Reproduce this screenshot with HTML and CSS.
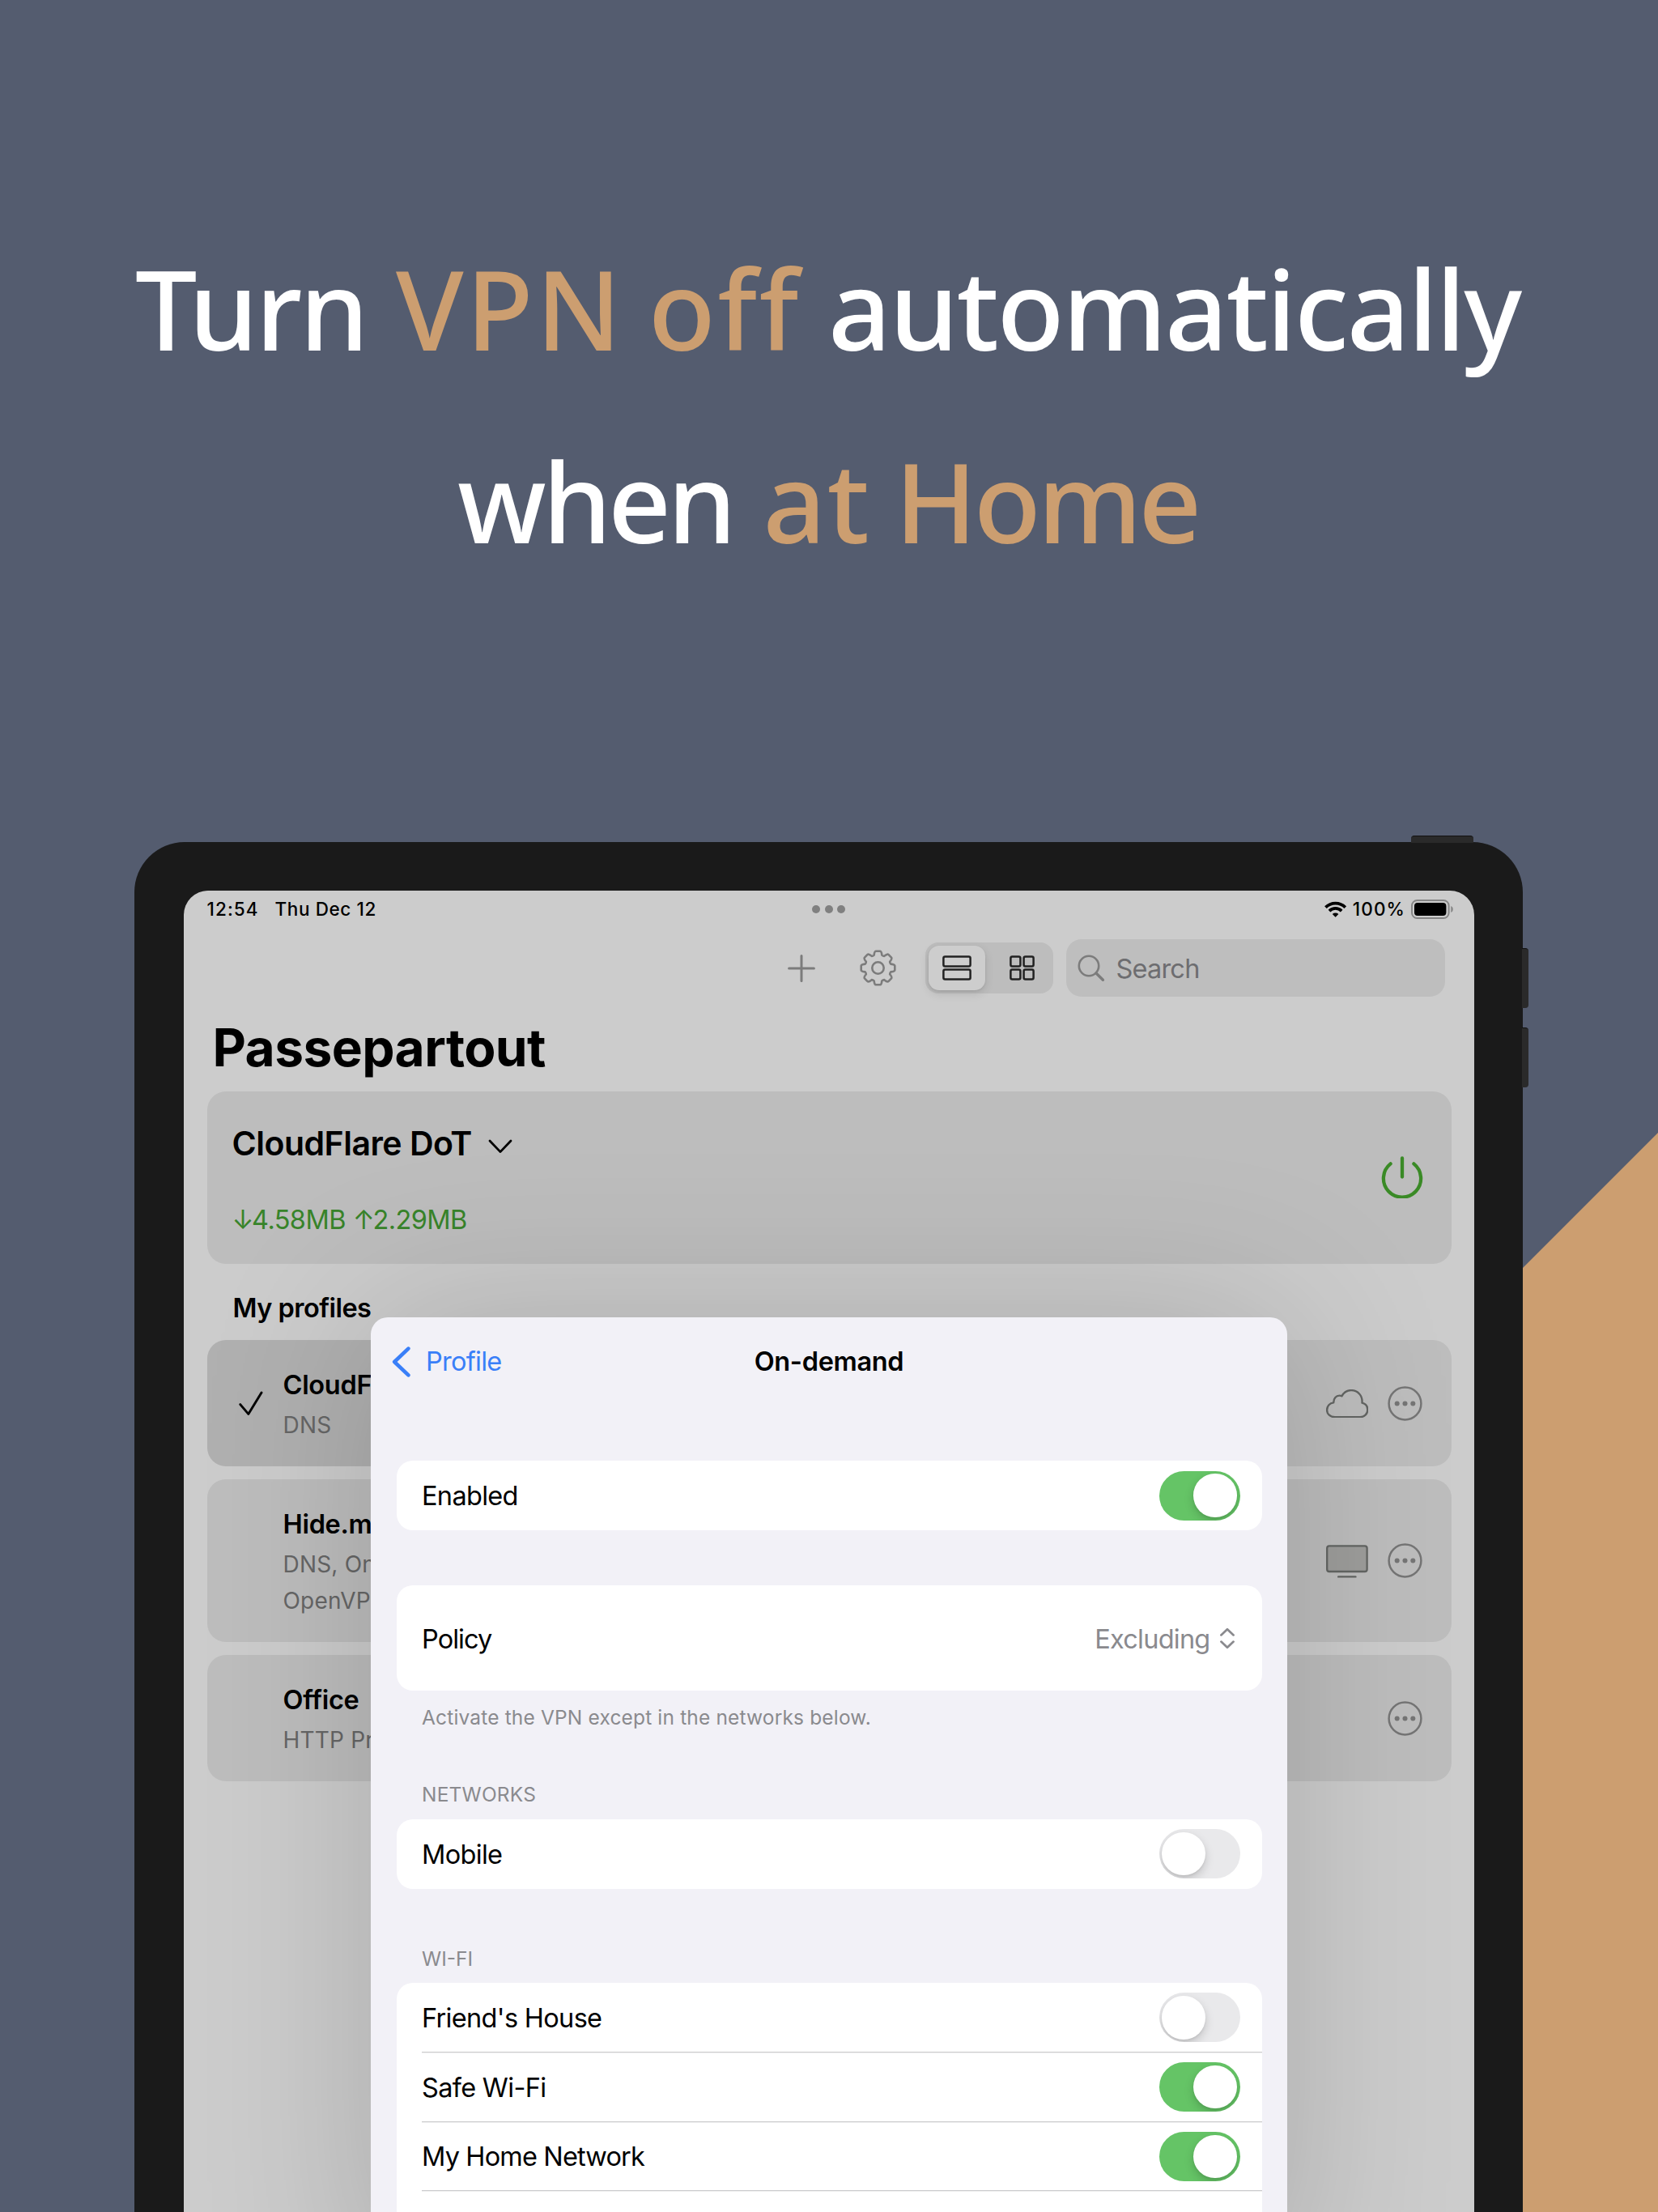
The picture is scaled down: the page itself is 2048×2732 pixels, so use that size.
FILE: index.html
```html
<!DOCTYPE html>
<html lang="en">
<head>
<meta charset="utf-8">
<title>Passepartout</title>
<link rel="stylesheet" href="styles.css">
</head>
<body>
<main class="poster">
  <div class="accent"></div>

  <h1 class="headline">
    <span class="headline-row">
      <span class="w-turn">Turn</span> <span class="w-vpn hl">VPN</span> <span class="w-off hl">off</span> <span class="w-auto">automatically</span>
    </span>
    <span class="headline-row second">
      <span class="w-when">when</span> <span class="w-at hl">at</span> <span class="w-home hl">Home</span>
    </span>
  </h1>

  <div class="device">
    <span class="key key-top"></span>
    <span class="key key-up"></span>
    <span class="key key-down"></span>

    <div class="screen">
      <div class="status">
        <div class="status-left"><span class="time">12:54</span><span class="date">Thu Dec 12</span></div>
        <div class="dots"><i></i><i></i><i></i></div>
        <div class="status-right">
          <svg class="wifi" viewBox="0 0 27.2 20" fill="none" stroke="#000" stroke-width="3.7"><path d="M1.4 7.6A17.2 17.2 0 0 1 25.8 7.6"/><path d="M6 12.1A10.8 10.8 0 0 1 21.2 12.1"/><path d="M13.6 19.8 9.8 15.9A5.6 5.6 0 0 1 17.4 15.9Z" fill="#000" stroke="none"/></svg>
          <span class="pct">100%</span>
          <svg class="battery" viewBox="0 0 53 24"><rect x="1" y="1" width="45.6" height="22" rx="6.5" fill="none" stroke="#858585" stroke-width="1.9"/><rect x="4" y="4" width="39.4" height="16" rx="4" fill="#000"/><path d="M49.3 8C52.6 9.2 52.6 14.8 49.3 16Z" fill="#858585"/></svg>
        </div>
      </div>

      <div class="toolbar">
        <svg class="ic-plus" viewBox="0 0 34 34" stroke="#7c7c7c" stroke-width="3" stroke-linecap="round"><path d="M17 1.6V32.4M1.6 17H32.4"/></svg>
        <svg class="ic-gear" viewBox="-22.5 -22.5 45 45" fill="none" stroke="#7c7c7c" stroke-width="2.6" stroke-linejoin="round"><path d="M-4.85-15.87Q-4.4-20.65-2.6-20.8H2.6Q4.4-20.65 4.85-15.87Q6.3-14.6 7.79-14.65Q11.5-17.7 12.9-16.55L16.55-12.9Q17.7-11.5 14.65-7.79Q14.6-6.3 15.87-4.85Q20.65-4.4 20.8-2.6V2.6Q20.65 4.4 15.87 4.85Q14.6 6.3 14.65 7.79Q17.7 11.5 16.55 12.9L12.9 16.55Q11.5 17.7 7.79 14.65Q6.3 14.6 4.85 15.87Q4.4 20.65 2.6 20.8H-2.6Q-4.4 20.65-4.85 15.87Q-6.3 14.6-7.79 14.65Q-11.5 17.7-12.9 16.55L-16.55 12.9Q-17.7 11.5-14.65 7.79Q-14.6 6.3-15.87 4.85Q-20.65 4.4-20.8 2.6V-2.6Q-20.65-4.4-15.87-4.85Q-14.6-6.3-14.65-7.79Q-17.7-11.5-16.55-12.9L-12.9-16.55Q-11.5-17.7-7.79-14.65Q-6.3-14.6-4.85-15.87Z"/><circle r="7.2"/></svg>
        <div class="segment">
          <div class="seg on"><svg class="ic-rows" viewBox="0 0 36 31" fill="none" stroke="#222" stroke-width="2.5"><rect x="1.4" y="1.4" width="33.2" height="12" rx="2"/><rect x="1.4" y="17.6" width="33.2" height="12" rx="2"/></svg></div>
          <div class="seg"><svg class="ic-grid" viewBox="0 0 31 31" fill="none" stroke="#222" stroke-width="2.5"><rect x="1.4" y="1.4" width="12" height="12" rx="2"/><rect x="17.6" y="1.4" width="12" height="12" rx="2"/><rect x="1.4" y="17.6" width="12" height="12" rx="2"/><rect x="17.6" y="17.6" width="12" height="12" rx="2"/></svg></div>
        </div>
        <div class="search">
          <svg class="ic-search" viewBox="0 0 34 34" fill="none" stroke="#7c7c7c" stroke-width="2.6" stroke-linecap="round"><circle cx="14" cy="14" r="12.2"/><path d="M23 23 31.4 31.2" stroke-width="3.4"/></svg>
          <span>Search</span>
        </div>
      </div>

      <h2 class="title">Passepartout</h2>

      <section class="current">
        <div class="current-info">
          <div class="current-name"><span>CloudFlare DoT</span><svg class="ic-chev" viewBox="0 0 30 18" fill="none" stroke="#000" stroke-width="2.8" stroke-linecap="round" stroke-linejoin="round"><path d="M2 2 15 15.6 28 2"/></svg></div>
          <div class="traffic"><span class="arrow">↓</span><span class="down">4.58MB</span><span class="arrow">↑</span><span>2.29MB</span></div>
        </div>
        <svg class="ic-power" viewBox="0 0 52 52" fill="none" stroke="#3a8a26" stroke-width="4.3" stroke-linecap="round"><path d="M11.6 9.4A23.1 23.1 0 1 0 40.4 9.4"/><path d="M26 2.4V25.6"/></svg>
      </section>

      <h3 class="section">My profiles</h3>

      <div class="profiles">
        <article class="profile selected">
          <svg class="ic-check" viewBox="0 0 30 31" fill="none" stroke="#000" stroke-width="2.9" stroke-linecap="round" stroke-linejoin="round"><path d="M1.8 16.6 11.8 28.4 28 2"/></svg>
          <div class="profile-text"><b>CloudFlare</b><p>DNS</p></div>
          <div class="profile-icons">
            <svg class="ic-cloud" viewBox="0 0 52.4 35.4" fill="none" stroke="#636563" stroke-width="2.4" stroke-linejoin="round"><path d="M11 34.2C5 34.2 1.1 30.5 1.1 25.4C1.1 20.5 4.6 16.8 9.2 16.4C9.2 11 12.5 7.6 16.5 7.6C17.6 7.6 18.5 7.8 19.4 8.3C21.8 4 26 1.1 31 1.1C39 1.1 45.4 7.5 44.5 16.6C48.7 17.6 51.3 21 51.3 25.2C51.3 30.5 47.2 34.2 42 34.2Z"/></svg>
            <svg class="ic-more" viewBox="0 0 43 43" fill="#757575"><circle cx="21.5" cy="21.5" r="19.9" fill="none" stroke="#757575" stroke-width="2.5"/><circle cx="11.7" cy="21.5" r="3"/><circle cx="21.5" cy="21.5" r="3"/><circle cx="31.3" cy="21.5" r="3"/></svg>
          </div>
        </article>
        <article class="profile tall">
          <span></span>
          <div class="profile-text"><b>Hide.me</b><p>DNS, On-demand,<br>OpenVPN</p></div>
          <div class="profile-icons">
            <svg class="ic-tv" viewBox="0 0 52 42"><rect x="1.2" y="1.4" width="49.4" height="31.6" rx="2.8" fill="#9d9d9b" stroke="#636563" stroke-width="2.3"/><path d="M15.2 39.4H36.4" stroke="#636563" stroke-width="2.4" stroke-linecap="round"/></svg>
            <svg class="ic-more" viewBox="0 0 43 43" fill="#757575"><circle cx="21.5" cy="21.5" r="19.9" fill="none" stroke="#757575" stroke-width="2.5"/><circle cx="11.7" cy="21.5" r="3"/><circle cx="21.5" cy="21.5" r="3"/><circle cx="31.3" cy="21.5" r="3"/></svg>
          </div>
        </article>
        <article class="profile">
          <span></span>
          <div class="profile-text"><b>Office</b><p>HTTP Proxy</p></div>
          <div class="profile-icons">
            <svg class="ic-more" viewBox="0 0 43 43" fill="#757575"><circle cx="21.5" cy="21.5" r="19.9" fill="none" stroke="#757575" stroke-width="2.5"/><circle cx="11.7" cy="21.5" r="3"/><circle cx="21.5" cy="21.5" r="3"/><circle cx="31.3" cy="21.5" r="3"/></svg>
          </div>
        </article>
      </div>

      <div class="modal">
        <header class="modal-nav">
          <a class="back"><svg class="ic-back" viewBox="0 0 23 38" fill="none" stroke="#3a7ff8" stroke-width="4.6" stroke-linecap="round" stroke-linejoin="round"><path d="M20.4 2.6 3.2 19 20.4 35.4"/></svg><span>Profile</span></a>
          <span class="modal-title">On-demand</span>
          <span></span>
        </header>
        <div class="group g-enabled">
          <div class="row"><span class="l-enabled">Enabled</span><span class="toggle on"></span></div>
        </div>
        <div class="group g-policy">
          <div class="row big"><span class="l-policy">Policy</span><span class="value"><span>Excluding</span><svg class="ic-updown" viewBox="0 0 20 27" fill="none" stroke="#8a8a8e" stroke-width="2.7" stroke-linecap="round" stroke-linejoin="round"><path d="M2.4 9.4 10 2.2 17.6 9.4M2.4 17.6 10 24.8 17.6 17.6"/></svg></span></div>
        </div>
        <p class="note">Activate the VPN except in the networks below.</p>
        <h4 class="label l-net">NETWORKS</h4>
        <div class="group">
          <div class="row"><span>Mobile</span><span class="toggle"></span></div>
        </div>
        <h4 class="label l-wifi">WI-FI</h4>
        <div class="group g-wifi">
          <div class="row"><span>Friend's House</span><span class="toggle"></span></div>
          <div class="row"><span>Safe Wi-Fi</span><span class="toggle on"></span></div>
          <div class="row"><span class="l-home">My Home Network</span><span class="toggle on"></span></div>
          <div class="row"></div>
        </div>
      </div>
    </div>
  </div>
</main>
</body>
</html>
```
FILE: styles.css
```css
* { box-sizing: border-box; }
body { margin: 0; }
h1, h2, h3, h4, p { margin: 0; font-size: inherit; font-weight: inherit; }
svg { display: block; flex: none; }

.poster {
  position: relative;
  width: 2048px;
  height: 2732px;
  overflow: hidden;
  background: #545c6f;
  color: #000;
  font: 32.5px/40px Inter, "Liberation Sans", sans-serif;
}
.accent {
  position: absolute;
  inset: 0;
  background: #cc9e70;
  clip-path: polygon(2048px 1399px, 2048px 2732px, 715px 2732px);
}

/* Headline */
.headline {
  height: 1040px;
  padding: 262px 0 0 167px;
  color: #fff;
  font: 500 136px/238px "Noto Sans", "Open Sans", sans-serif;
}
.headline-row { display: flex; }
.second { padding-left: 398px; }
.hl { color: #cc9e70; }
.w-turn { letter-spacing: -3.1px; }
.w-vpn { letter-spacing: 3.2px; margin-left: 36.7px; }
.w-off { letter-spacing: 2.7px; margin-left: 30px; }
.w-auto { letter-spacing: -2.2px; margin-left: 34px; }
.w-when { letter-spacing: -4.5px; }
.w-at { letter-spacing: 1.5px; margin-left: 37px; }
.w-home { letter-spacing: -4.2px; margin-left: 30px; }

/* Tablet */
.device {
  position: relative;
  width: 1715px;
  height: 1692px;
  margin-left: 166px;
  padding: 60px 60px 0 60.5px;
  background: #1a1a1a;
  border-radius: 62px 62px 0 0;
}
.key { position: absolute; background: #2a2a2a; }
.key-top { left: 1577px; top: -8.5px; width: 77px; height: 9px; border-radius: 4px 4px 0 0; border-top: 1.5px solid #111; }
.key-up, .key-down { left: 1714px; width: 7.5px; height: 74px; border-radius: 0 4px 4px 0; border-top: 1.5px solid #111; }
.key-up { top: 130.5px; }
.key-down { top: 228.5px; }

.screen {
  position: relative;
  height: 1632px;
  overflow: hidden;
  background: #ccc;
  border-radius: 30px 30px 0 0;
}

/* Status bar */
.status {
  display: grid;
  grid-template-columns: 1fr auto 1fr;
  align-items: center;
  height: 46px;
  padding: 0 25px;
  font-size: 22.5px;
  font-weight: 500;
}
.status-left, .status-right { display: flex; align-items: center; }
.status-left { padding-left: 4px; }
.status-right { justify-content: flex-end; }
.time { letter-spacing: 1.1px; margin-right: 19.8px; }
.date { letter-spacing: .6px; }
.dots { display: flex; gap: 5.7px; }
.dots i { width: 10px; height: 10px; border-radius: 50%; background: #808080; }
.wifi { width: 27.2px; height: 20px; margin-right: 8px; }
.pct { letter-spacing: 1.1px; margin-right: 7px; }
.battery { width: 53px; height: 24px; }

/* Toolbar */
.toolbar {
  display: flex;
  align-items: center;
  justify-content: flex-end;
  height: 71px;
  margin-top: 14px;
  padding-right: 36px;
}
.ic-plus { width: 34px; height: 34px; margin-right: 55.2px; }
.ic-gear { width: 45px; height: 45px; margin-right: 35.7px; }
.segment {
  display: flex;
  width: 158px;
  height: 63px;
  padding: 4px;
  background: #bdbdbd;
  border-radius: 16px;
}
.seg { flex: 1; display: flex; align-items: center; justify-content: center; padding-left: 10px; }
.seg.on { flex: none; width: 70px; padding: 0; background: #cdcdcd; border-radius: 13px; box-shadow: 0 4px 12px rgba(0,0,0,.12), 0 1px 3px rgba(0,0,0,.08); }
.ic-rows { width: 36px; height: 31px; }
.ic-grid { width: 31px; height: 31px; }
.search {
  display: flex;
  align-items: center;
  gap: 13.5px;
  width: 468px;
  height: 71px;
  margin-left: 16px;
  padding-left: 14px;
  background: #bebebe;
  border-radius: 19px;
  color: #6d6d70;
  letter-spacing: -.8px;
}
.search span { padding-top: 2px; }
.ic-search { width: 34px; height: 34px; }

.title {
  padding: 31px 0 22px 36px;
  font-size: 64px;
  line-height: 64px;
  font-weight: 700;
  letter-spacing: -.58px;
}

/* Current connection */
.current {
  display: flex;
  align-items: center;
  justify-content: space-between;
  width: 1537px;
  height: 212.5px;
  margin-left: 29px;
  padding: 0 35px 0 31px;
  background: #bdbdbd;
  border-radius: 23px;
}
.current-info { align-self: flex-start; padding-top: 39px; }
.current-name { display: flex; align-items: center; gap: 20px; font-size: 41px; line-height: 50px; font-weight: 600; letter-spacing: -.5px; }
.ic-chev { width: 30px; height: 18px; margin-top: 7px; }
.traffic { display: flex; margin-top: 49.5px; color: #38842a; letter-spacing: -.6px; }
.arrow { letter-spacing: -2.5px; }
.down { margin-right: 9px; }
.ic-power { width: 52px; height: 52px; }

.section { padding: 35.5px 0 18.5px 61px; font-weight: 600; letter-spacing: -.53px; }

/* Profiles */
.profiles { display: flex; flex-direction: column; gap: 16px; width: 1537px; margin-left: 29px; }
.profile {
  display: grid;
  grid-template-columns: 94px 108px 1fr;
  align-items: center;
  height: 156px;
  padding-right: 35.5px;
  background: #bdbdbd;
  border-radius: 23px;
}
.profile.selected { background: linear-gradient(90deg, #b0b0b0 50%, #bdbdbd 50%); }
.profile.tall { height: 201px; }
.ic-check { width: 30px; height: 31px; margin-left: 39.5px; margin-top: 1px; }
.profile-text { align-self: start; padding-top: 36px; white-space: nowrap; }
.profile-text b { display: block; font-weight: 600; letter-spacing: -.3px; }
.profile-text p { margin-top: 7px; font-size: 28px; line-height: 45px; letter-spacing: .2px; color: #666; }
.profile-icons { display: flex; align-items: center; justify-content: flex-end; gap: 24px; padding-top: 1px; }
.ic-cloud { width: 52.4px; height: 35.4px; margin-top: 1px; }
.ic-tv { width: 52px; height: 42px; margin-top: 2px; }
.ic-more { width: 43px; height: 43px; }

/* Sheet */
.modal {
  position: absolute;
  left: 231.5px;
  top: 527px;
  width: 1132px;
  height: 1200px;
  padding: 0 31.5px;
  background: #f2f1f7;
  border-radius: 21px;
  box-shadow: 0 0 210px rgba(0,0,0,.17);
}
.modal-nav {
  display: grid;
  grid-template-columns: 1fr auto 1fr;
  align-items: center;
  height: 109px;
  margin: 0 -31.5px 68.3px;
}
.back { display: flex; align-items: center; gap: 19px; padding-left: 26px; color: #3a7ff8; letter-spacing: -.74px; }
.ic-back { width: 23px; height: 38px; }
.modal-title { font-weight: 600; letter-spacing: -.32px; }

.group { background: #fff; border-radius: 20px; overflow: hidden; }
.row {
  position: relative;
  display: flex;
  align-items: center;
  justify-content: space-between;
  height: 85.8px;
  padding: 0 27px 0 31.5px;
  letter-spacing: -.68px;
}
.row > span:first-child, .value > span { padding-top: 2px; }
.row.big { height: 130px; padding: 1px 33px 0 31.5px; }
.row + .row::before { content: ""; position: absolute; left: 31px; right: 0; top: -1px; height: 1px; background: #cbcbcd; box-shadow: 0 1px #efeff0; }
.g-enabled { margin-bottom: 68px; }
.g-wifi { border-radius: 20px 20px 0 0; }
.l-policy { letter-spacing: -.95px; }
.l-home { letter-spacing: -.85px; }
.value { display: flex; align-items: center; gap: 11px; color: #8a8a8e; letter-spacing: -.77px; }
.ic-updown { width: 20px; height: 27px; }
.note { padding: 18.4px 0 0 31.5px; font-size: 24.5px; line-height: 30px; letter-spacing: .16px; color: #8a8a8e; }
.label { padding: 64.7px 0 15.6px 31.5px; font-size: 24.5px; line-height: 30px; letter-spacing: .2px; color: #8a8a8e; }
.l-wifi { padding-top: 71px; padding-bottom: 15.4px; letter-spacing: 0; }

.toggle {
  display: flex;
  align-items: center;
  width: 100px;
  height: 61px;
  padding: 0 3.7px;
  background: #e9e9eb;
  border-radius: 31px;
  overflow: hidden;
}
.toggle::before { content: ""; width: 53.4px; height: 53.4px; border-radius: 50%; background: #fff; box-shadow: 0 5px 12px rgba(0,0,0,.17), 0 2px 3px rgba(0,0,0,.06); }
.toggle.on { justify-content: flex-end; background: #65c466; }
```
